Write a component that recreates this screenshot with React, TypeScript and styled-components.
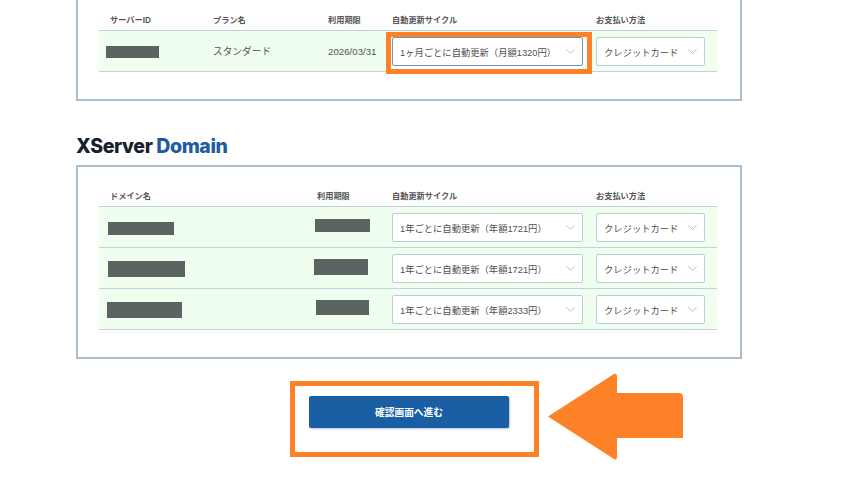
import styled, { createGlobalStyle } from "styled-components";
import { ChevronDown } from "lucide-react";

const GlobalStyle = createGlobalStyle`
  html, body {
    margin: 0;
    background: #fff;
    overflow: hidden;
  }
  body {
    font-family: "Liberation Sans", "Noto Sans CJK JP", sans-serif;
    color: #4a4a4a;
  }
`;

const serverCols = "114px 115px 64px 204px 122px";
const domainCols = "218px 75px 204px 122px";

const domains = [
  { name: [66, 13, 9, 15], date: [55, 13, -2, 12], plan: "1年ごとに自動更新（年額1721円）" },
  { name: [77, 16, 9, 13], date: [54, 16, -3, 11], plan: "1年ごとに自動更新（年額1721円）" },
  { name: [75, 16, 8, 13], date: [53, 15, -1, 11], plan: "1年ごとに自動更新（年額2333円）" },
];

function Select({ label, width, active }: { label: string; width: number; active?: boolean }) {
  return (
    <SelectBox $width={width} $active={active}>
      <span>{label}</span>
      <ChevronDown size={15} strokeWidth={1.1} color="#8ea2b0" />
    </SelectBox>
  );
}

export default function App() {
  return (
    <Page>
      <GlobalStyle />
      <ServerPanel>
        <HeadRow $cols={serverCols}>
          <HeadCell $pad={11}>サーバーID</HeadCell>
          <HeadCell>プラン名</HeadCell>
          <HeadCell>利用期限</HeadCell>
          <HeadCell>自動更新サイクル</HeadCell>
          <HeadCell>お支払い方法</HeadCell>
        </HeadRow>
        <Row $cols={serverCols}>
          <Cell>
            <Redacted $w={53} $h={12} $x={7} $y={15} />
          </Cell>
          <TextCell>スタンダード</TextCell>
          <TextCell>2026/03/31</TextCell>
          <Cell>
            <SelectWrap>
              <Highlight />
              <Select label="1ヶ月ごとに自動更新（月額1320円）" width={191} active />
            </SelectWrap>
          </Cell>
          <Cell>
            <Select label="クレジットカード" width={109} />
          </Cell>
        </Row>
      </ServerPanel>

      <Logo>
        XServer <LogoAccent>Domain</LogoAccent>
      </Logo>

      <DomainPanel>
        <HeadRow $cols={domainCols}>
          <HeadCell $pad={11}>ドメイン名</HeadCell>
          <HeadCell>利用期限</HeadCell>
          <HeadCell>自動更新サイクル</HeadCell>
          <HeadCell>お支払い方法</HeadCell>
        </HeadRow>
        {domains.map((d, i) => (
          <Row $cols={domainCols} key={i}>
            <Cell>
              <Redacted $w={d.name[0]} $h={d.name[1]} $x={d.name[2]} $y={d.name[3]} />
            </Cell>
            <Cell>
              <Redacted $w={d.date[0]} $h={d.date[1]} $x={d.date[2]} $y={d.date[3]} />
            </Cell>
            <Cell>
              <Select label={d.plan} width={191} />
            </Cell>
            <Cell>
              <Select label="クレジットカード" width={109} />
            </Cell>
          </Row>
        ))}
      </DomainPanel>

      <ActionRow>
        <ButtonFrame>
          <NextButton>確認画面へ進む</NextButton>
        </ButtonFrame>
        <svg width="136" height="88" viewBox="0 0 136 88">
          <path
            d="M0 43.5 L66 1 Q69 0 69 3 V20 H131 Q135 20 135 24 V65 H69 V84 Q69 88 66 86 Z"
            fill="#fd8127"
          />
        </svg>
      </ActionRow>
    </Page>
  );
}

const Page = styled.div`
  width: 854px;
  height: 497px;
  padding-left: 76px;
  box-sizing: border-box;
`;

const Panel = styled.section`
  width: 666px;
  box-sizing: border-box;
  background: #fff;
  border: 2px solid #a9bdd0;
  padding: 0 23px 27px 21px;
`;

const ServerPanel = styled(Panel)`
  border-top: none;
  padding-top: 11px;
`;

const DomainPanel = styled(Panel)`
  padding-top: 20px;
`;

const HeadRow = styled.div<{ $cols: string }>`
  display: grid;
  grid-template-columns: ${(p) => p.$cols};
  height: 20px;
  box-sizing: border-box;
  border-bottom: 1px solid #bcd0da;
`;

const HeadCell = styled.div<{ $pad?: number }>`
  padding-left: ${(p) => p.$pad ?? 0}px;
  padding-top: 3px;
  font-size: 8.2px;
  line-height: 14px;
  font-weight: 700;
  color: #555;
  white-space: nowrap;
`;

const Row = styled.div<{ $cols: string }>`
  display: grid;
  grid-template-columns: ${(p) => p.$cols};
  height: 41px;
  box-sizing: border-box;
  background: #f0fef0;
  border-bottom: 1px solid #bfd3da;
`;

const Cell = styled.div`
  display: flex;
  align-items: flex-start;
`;

const TextCell = styled(Cell)`
  align-items: center;
  font-size: 9.7px;
  color: #555;
  white-space: nowrap;
`;

const Redacted = styled.div<{ $w: number; $h: number; $x: number; $y: number }>`
  width: ${(p) => p.$w}px;
  height: ${(p) => p.$h}px;
  margin-left: ${(p) => p.$x}px;
  margin-top: ${(p) => p.$y}px;
  background: #5c6461;
`;

const SelectWrap = styled.div`
  position: relative;
`;

const Highlight = styled.div`
  position: absolute;
  left: -6px;
  right: -9px;
  top: 1px;
  bottom: -8px;
  background: #fff;
  border: 5px solid #fd8127;
`;

const SelectBox = styled.div<{ $width: number; $active?: boolean }>`
  position: relative;
  width: ${(p) => p.$width}px;
  height: 29px;
  margin-top: 6px;
  box-sizing: border-box;
  padding: 0 4px 0 7px;
  display: flex;
  align-items: center;
  justify-content: space-between;
  background: #fff;
  border: 1px solid ${(p) => (p.$active ? "#6f97bb" : "#bccdd6")};
  border-radius: 2px;
  font-size: 9.3px;
  color: #4f4f4f;
  white-space: nowrap;
`;

const Logo = styled.h2`
  margin: 34px 0 7px;
  font-family: Inter, "Liberation Sans", sans-serif;
  font-size: 19.5px;
  line-height: 23px;
  font-weight: 800;
  letter-spacing: -0.4px;
  color: #17202c;
`;

const LogoAccent = styled.span`
  color: #1c5c9f;
`;

const ActionRow = styled.div`
  display: flex;
  align-items: flex-start;
  gap: 9px;
  margin-top: 14px;
  margin-left: 214px;
`;

const ButtonFrame = styled.div`
  width: 249px;
  height: 76px;
  margin-top: 8px;
  box-sizing: border-box;
  padding: 10px 0 0 14px;
  border: 5px solid #fd8127;
`;

const NextButton = styled.button`
  display: block;
  width: 200px;
  height: 32px;
  padding: 0;
  border: none;
  border-radius: 2px;
  background: #1a5ea4;
  box-shadow: 1px 1px 2px rgba(60, 90, 130, 0.35);
  color: #fff;
  font-family: inherit;
  font-size: 9.7px;
  font-weight: 700;
`;
